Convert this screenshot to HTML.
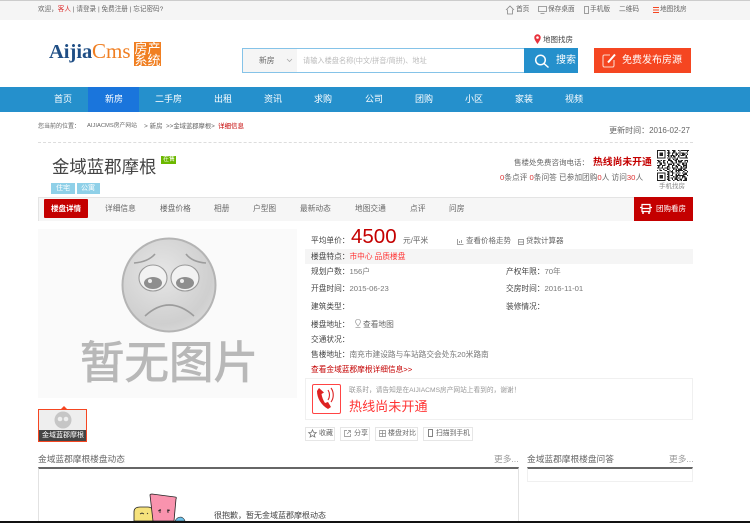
<!DOCTYPE html>
<html lang="zh"><head><meta charset="utf-8"><title>金域蓝郡摩根</title>
<style>
html,body{margin:0;padding:0;background:#fff}
body{width:750px;height:523px;position:relative;overflow:hidden;font-family:"Liberation Sans","Noto Sans CJK SC",sans-serif;color:#666}
.t{position:absolute;white-space:nowrap;line-height:1;font-size:7.700px}
.b{position:absolute;box-sizing:border-box}
.r{color:#c40000}.w{color:#fff}.d{color:#444}
.btn{position:absolute;top:427px;height:14px;box-sizing:border-box;border:1px solid #e6e6e6;background:#fff;font-size:7px;line-height:12px;color:#666;white-space:nowrap}
svg{position:absolute;overflow:visible}
#soft{position:absolute;left:0;top:0;width:750px;height:523px;filter:blur(.35px)}
</style></head><body><div id="soft">
<div class="b" style="left:0;top:0;width:750px;height:20px;background:#f5f5f5;border-top:1px solid #ccc"></div>
<div class="t" style="left:38px;top:7px;font-size:6.600px"><span>欢迎，</span><span style="color:#d33">客人</span> | 请登录 | 免费注册 | 忘记密码?</div>
<svg style="left:505px;top:5px" width="10" height="10" viewBox="0 0 10 10" fill="none" stroke="#888" stroke-width=".8"><path d="M1 5 5 1l4 4M2.500 4.500V9h5V4.500"/></svg>
<div class="t" style="left:516px;top:7px;font-size:6.700px">首页</div>
<svg style="left:538px;top:6px" width="9" height="8" viewBox="0 0 9 8" fill="none" stroke="#888" stroke-width=".8"><path d="M.5.500h8v5h-8zM2.500 7.500h4"/></svg>
<div class="t" style="left:548px;top:7px;font-size:6.700px">保存桌面</div>
<svg style="left:584px;top:6px" width="5" height="8" viewBox="0 0 5 8" fill="none" stroke="#888" stroke-width=".8"><rect x=".5" y=".5" width="4" height="7"/></svg>
<div class="t" style="left:590px;top:7px;font-size:6.700px">手机版</div>
<div class="t" style="left:619px;top:7px;font-size:6.700px">二维码</div>
<div class="b" style="left:653px;top:7px;width:6px;height:1px;background:#f54621;box-shadow:0 2.500px 0 #f54621,0 5px 0 #f54621"></div>
<div class="t" style="left:660px;top:7px;font-size:6.700px">地图找房</div>

<div class="t" style="left:49px;top:42px;font:bold 20.500px/1 'Liberation Serif',serif;color:#1f4e85">Aijia</div>
<div class="t" style="left:92px;top:41px;font:21px/1 'Liberation Serif',serif;color:#f07f22">Cms</div>
<div class="b" style="left:134px;top:42px;width:27px;height:24px;background:#f07f22"></div>
<div class="t w" style="left:134.500px;top:42px;font-size:13px">房产</div>
<div class="t w" style="left:134.500px;top:54px;font-size:13px">系统</div>

<svg style="left:534px;top:34px" width="7" height="10" viewBox="0 0 7 10"><path d="M3.500 10C1.500 7 .3 5.500.3 3.500a3.200 3.200 0 0 1 6.400 0C6.700 5.500 5.500 7 3.500 10z" fill="#e8323c"/><circle cx="3.500" cy="3.500" r="1.300" fill="#fff"/></svg>
<div class="t d" style="left:543px;top:36px;font-size:7.500px">地图找房</div>

<div class="b" style="left:242px;top:48px;width:283px;height:25px;border:1px solid #85c3e8;background:#fff"></div>
<div class="b" style="left:243px;top:49px;width:54px;height:23px;background:#f5f5f5"></div>
<div class="t" style="left:259px;top:57px;font-size:7.700px">新房</div>
<svg style="left:286px;top:58px" width="7" height="5" viewBox="0 0 7 5" fill="none" stroke="#aaa" stroke-width=".8"><path d="M1 1l2.500 2.500L6 1"/></svg>
<div class="t" style="left:303px;top:57px;font-size:7.200px;color:#bbb">请输入楼盘名称(中文/拼音/简拼)、地址</div>
<div class="b" style="left:524px;top:48px;width:54px;height:25px;background:#2590cc"></div>
<svg style="left:534px;top:54px" width="16" height="14" viewBox="0 0 16 14" fill="none" stroke="#fff" stroke-width="1.500"><circle cx="6.500" cy="6" r="4.800"/><path d="M10 9.500l4.500 4"/></svg>
<div class="t w" style="left:556px;top:56px;font-size:10px">搜索</div>
<div class="b" style="left:594px;top:48px;width:97px;height:25px;background:#f54621"></div>
<svg style="left:602px;top:53px" width="15" height="15" viewBox="0 0 15 15" fill="none" stroke="#fbd5c8" stroke-width="1.100"><path d="M8 2H2.500A1.500 1.500 0 0 0 1 3.500v9A1.500 1.500 0 0 0 2.500 14h8a1.500 1.500 0 0 0 1.500-1.500V7"/><path d="M6 9.500 13 1.500" stroke="#fff" stroke-width="2"/></svg>
<div class="t w" style="left:622px;top:56px;font-size:10px">免费发布房源</div>

<div class="b" style="left:0;top:87px;width:750px;height:25px;background:#2590cc"></div>
<div class="b" style="left:88px;top:87px;width:51px;height:25px;background:#1a75dc"></div>
<div class="t w" style="left:54px;top:95px;font-size:9px">首页</div>
<div class="t w" style="left:105px;top:95px;font-size:9px">新房</div>
<div class="t w" style="left:155px;top:95px;font-size:9px">二手房</div>
<div class="t w" style="left:214px;top:95px;font-size:9px">出租</div>
<div class="t w" style="left:264px;top:95px;font-size:9px">资讯</div>
<div class="t w" style="left:314px;top:95px;font-size:9px">求购</div>
<div class="t w" style="left:365px;top:95px;font-size:9px">公司</div>
<div class="t w" style="left:415px;top:95px;font-size:9px">团购</div>
<div class="t w" style="left:465px;top:95px;font-size:9px">小区</div>
<div class="t w" style="left:515px;top:95px;font-size:9px">家装</div>
<div class="t w" style="left:565px;top:95px;font-size:9px">视频</div>

<div class="t" style="left:38px;top:124px;font-size:6px">您当前的位置：</div>
<div class="t" style="left:87px;top:124px;font-size:5.800px">AIJIACMS房产网站</div>
<div class="t" style="left:144px;top:124px;font-size:6.500px">&gt; 新房</div>
<div class="t" style="left:166px;top:124px;font-size:6.300px">&gt;&gt;金域蓝郡摩根&gt;</div>
<div class="t r" style="left:218px;top:124px;font-size:6.500px">详细信息</div>
<div class="t" style="right:60px;top:127px;font-size:8px">更新时间：2016-02-27</div>
<div class="b" style="left:38px;top:142px;width:655px;height:0;border-top:1px dashed #ddd"></div>

<div class="t" style="left:52px;top:159px;font-size:17.400px;color:#444">金域蓝郡摩根</div>
<div class="b" style="left:161px;top:156px;width:15px;height:8px;background:#6cb800"></div>
<div class="t w" style="left:163px;top:157px;font-size:6px">在售</div>
<div class="b" style="left:51px;top:183px;width:24px;height:11px;background:#8fd0e8"></div>
<div class="b" style="left:77px;top:183px;width:23px;height:11px;background:#8fd0e8"></div>
<div class="t w" style="left:56px;top:185px;font-size:7px">住宅</div>
<div class="t w" style="left:81px;top:185px;font-size:7px">公寓</div>

<div class="t" style="left:514px;top:159px;font-size:7.500px">售楼处免费咨询电话：</div>
<div class="t r" style="left:593px;top:158px;font-size:9.800px;font-weight:bold">热线尚未开通</div>
<div class="t" style="left:500px;top:174px;font-size:7.700px"><span style="color:#d33">0</span>条点评 <span style="color:#d33">0</span>条问答 已参加团购<span style="color:#d33">0</span>人 访问<span style="color:#d33">30</span>人</div>
<svg style="left:657px;top:150px" width="31" height="31" viewBox="0 0 25 25" shape-rendering="crispEdges">
<path fill="none" stroke="#222" d="M0 .5h7m1 0h2m2 0h3m2 0h1m1 0h7M0 1.500h1m5 0h1m2 0h1m3 0h2m3 0h1m5 0h1M0 2.500h1m1 0h3m1 0h1m1 0h3m1 0h2m1 0h1m1 0h1m1 0h3m1 0h1M0 3.500h1m1 0h3m1 0h1m2 0h1m2 0h1m2 0h2m1 0h1m1 0h3m1 0h1M0 4.500h1m1 0h3m1 0h1m1 0h2m1 0h3m1 0h1m1 0h1m1 0h3m1 0h1M0 5.500h1m5 0h1m2 0h1m1 0h1m1 0h2m2 0h1m5 0h1M0 6.500h7m1 0h1m1 0h1m1 0h1m1 0h1m1 0h1m1 0h7M9 7.500h2m2 0h1m1 0h2M0 8.500h2m1 0h1m1 0h2m2 0h3m2 0h2m1 0h1m1 0h2m1 0h3M1 9.500h2m2 0h1m2 0h1m2 0h2m2 0h1m1 0h3m2 0h1m1 0h1M0 10.500h1m1 0h2m1 0h2m1 0h1m3 0h2m1 0h1m2 0h1m1 0h2m1 0h1M2 11.500h2m2 0h1m2 0h3m1 0h1m2 0h2m2 0h2m1 0h1M0 12.500h3m1 0h3m2 0h1m2 0h2m1 0h1m1 0h2m2 0h3M1 13.500h1m2 0h1m3 0h2m2 0h1m2 0h2m2 0h1m1 0h1m1 0h1M0 14.500h2m1 0h2m1 0h3m1 0h1m1 0h3m1 0h1m2 0h2m1 0h2M2 15.500h1m2 0h1m2 0h2m3 0h1m1 0h1m1 0h3m1 0h2M0 16.500h1m1 0h2m2 0h2m2 0h1m1 0h1m2 0h6m1 0h2M8 17.500h2m1 0h2m2 0h1m1 0h1m3 0h1m2 0h1M0 18.500h7m2 0h1m2 0h2m2 0h1m1 0h1m1 0h1m1 0h2M0 19.500h1m5 0h1m1 0h2m2 0h1m2 0h1m1 0h1m3 0h3M0 20.500h1m1 0h3m1 0h1m2 0h1m1 0h2m2 0h7m2 0h1M0 21.500h1m1 0h3m1 0h1m1 0h2m3 0h1m1 0h2m1 0h1m1 0h3M0 22.500h1m1 0h3m1 0h1m2 0h1m1 0h2m1 0h2m1 0h1m2 0h1m1 0h2M0 23.500h1m5 0h1m1 0h2m2 0h1m1 0h3m1 0h2m2 0h2M0 24.500h7m2 0h2m2 0h1m2 0h2m1 0h1m1 0h3"/></svg>
<div class="t" style="left:659px;top:184px;font-size:6.500px;color:#888">手机找房</div>

<div class="b" style="left:38px;top:197px;width:655px;height:24px;background:#f6f6f6;border-top:1px solid #e4e4e4;border-left:1px solid #e4e4e4"></div>
<div class="b" style="left:44px;top:199px;width:44px;height:19px;background:#c40000;border-radius:1px"></div>
<div class="t w" style="left:51px;top:205px;font-size:7.500px;font-weight:bold">楼盘详情</div>
<div class="t" style="left:105px;top:205px;font-size:7.700px">详细信息</div>
<div class="t" style="left:160px;top:205px;font-size:7.700px">楼盘价格</div>
<div class="t" style="left:214px;top:205px;font-size:7.700px">相册</div>
<div class="t" style="left:253px;top:205px;font-size:7.700px">户型图</div>
<div class="t" style="left:300px;top:205px;font-size:7.700px">最新动态</div>
<div class="t" style="left:355px;top:205px;font-size:7.700px">地图交通</div>
<div class="t" style="left:410px;top:205px;font-size:7.700px">点评</div>
<div class="t" style="left:449px;top:205px;font-size:7.700px">问房</div>
<div class="b" style="left:634px;top:197px;width:59px;height:24px;background:#c40000"></div>
<svg style="left:640px;top:203px" width="12" height="12" viewBox="0 0 12 12" fill="none" stroke="#fff" stroke-width="1.200"><path d="M2 1.500h8v7H2zM0 4.500h2M10 4.500h2M2 5.500h8"/><path d="M3 9v2M9 9v2" stroke-width="1.500"/></svg>
<div class="t w" style="left:656px;top:205px;font-size:7.500px">团购看房</div>

<div class="b" style="left:38px;top:229px;width:259px;height:169px;background:#fafafa"></div>
<svg style="left:0;top:0" width="750" height="523">
<defs><radialGradient id="g" cx=".42" cy=".38" r=".72"><stop offset="0" stop-color="#e6e6e6"/><stop offset=".75" stop-color="#cfcfcf"/><stop offset="1" stop-color="#dcdcdc"/></radialGradient></defs>
<circle cx="169" cy="285" r="46.500" fill="url(#g)" stroke="#b4b4b4" stroke-width="2"/>
<ellipse cx="153" cy="278" rx="14" ry="13" fill="#f2f2f2" stroke="#999" stroke-width="1.100"/>
<ellipse cx="185" cy="278" rx="14" ry="13" fill="#f2f2f2" stroke="#999" stroke-width="1.100"/>
<ellipse cx="153" cy="283" rx="9" ry="6" fill="#8e8e8e"/><ellipse cx="185" cy="283" rx="9" ry="6" fill="#8e8e8e"/>
<circle cx="150" cy="281" r="2" fill="#eee"/><circle cx="182" cy="281" r="2" fill="#eee"/>
<path d="M134 263Q148 262 155 254M186 254Q192 262 206 263M145 316Q169 294 194 316" fill="none" stroke="#9c9c9c" stroke-width="1.600"/>
</svg>
<div class="t" style="left:80px;top:342px;font-size:44.500px;color:#b8b8b8;-webkit-text-stroke:.9px #b8b8b8">暂无图片</div>

<div class="b" style="left:61px;top:406px;width:0;height:0;border:3px solid transparent;border-top:0;border-bottom:3px solid #f54621"></div>
<div class="b" style="left:38px;top:409px;width:49px;height:33px;background:#eee;border:1px solid #f54621"></div>
<svg style="left:0;top:0" width="750" height="523"><circle cx="63" cy="420" r="8.500" fill="#c6c6c6"/><circle cx="60" cy="419" r="2.300" fill="#eee"/><circle cx="66" cy="419" r="2.300" fill="#eee"/></svg>
<div class="b" style="left:39px;top:430px;width:47px;height:11px;background:#444"></div>
<div class="t w" style="left:42px;top:432px;font-size:7px">金域蓝郡摩根</div>

<div class="t" style="left:311px;top:237px;color:#444">平均单价：</div>
<div class="t r" style="left:351px;top:227px;font-size:20.500px">4500</div>
<div class="t" style="left:403px;top:237px">元/平米</div>
<svg style="left:457px;top:239px" width="7" height="6" fill="none" stroke="#888" stroke-width=".8"><path d="M.5 0v5.500h6M2.500 4V2M4.500 4V1"/></svg>
<div class="t" style="left:466px;top:237px;font-size:7.500px">查看价格走势</div>
<svg style="left:518px;top:239px" width="6" height="6" fill="none" stroke="#888" stroke-width=".8"><rect x=".5" y=".5" width="5" height="5"/><path d="M.5 3h5"/></svg>
<div class="t" style="left:526px;top:237px;font-size:7.500px">贷款计算器</div>
<div class="b" style="left:305px;top:249px;width:388px;height:15px;background:#f5f5f5"></div>
<div class="t" style="left:311px;top:253px;color:#444">楼盘特点：<span style="color:#f33">市中心 品质楼盘</span></div>
<div class="t" style="left:311px;top:268px;color:#444">规划户数：<span style="color:#777">156户</span></div>
<div class="t" style="left:506px;top:268px;color:#444">产权年限：<span style="color:#777">70年</span></div>
<div class="t" style="left:311px;top:285px;color:#444">开盘时间：<span style="color:#777">2015-06-23</span></div>
<div class="t" style="left:506px;top:285px;color:#444">交房时间：<span style="color:#777">2016-11-01</span></div>
<div class="t" style="left:311px;top:303px;color:#444">建筑类型：</div>
<div class="t" style="left:506px;top:303px;color:#444">装修情况：</div>
<div class="t" style="left:311px;top:321px;color:#444">楼盘地址：</div>
<svg style="left:355px;top:319px" width="6" height="9" viewBox="0 0 6 9" fill="none" stroke="#999" stroke-width=".7"><path d="M3 7C1.500 5 .5 4 .5 2.800a2.500 2.500 0 0 1 5 0C5.500 4 4.500 5 3 7z"/><path d="M.5 8.500h5"/></svg>
<div class="t" style="left:363px;top:321px">查看地图</div>
<div class="t" style="left:311px;top:336px;color:#444">交通状况：</div>
<div class="t" style="left:311px;top:351px;color:#444">售楼地址：<span style="color:#777">南充市建设路与车站路交会处东20米路南</span></div>
<div class="t r" style="left:311px;top:366px">查看金域蓝郡摩根详细信息&gt;&gt;</div>

<div class="b" style="left:305px;top:378px;width:388px;height:42px;border:1px solid #f0f0f0"></div>
<div class="b" style="left:312px;top:384px;width:29px;height:30px;border:1px solid #f44;border-radius:2px"></div>
<svg style="left:315px;top:386px" width="23" height="26" viewBox="0 0 23 26" fill="none"><path d="M4 2 2 5c0 7 4 14 11 18l3-2-3-5-3 1C8 14 7 11 6.500 8L9 6.500z" fill="#d22"/><path d="M13 4c2 3 2 7 0 10M16 2c3 4 3 10 0 14" stroke="#d22" stroke-width="1.100"/></svg>
<div class="t" style="left:349px;top:388px;font-size:6.700px;color:#999">联系时，请告知是在AIJIACMS房产网站上看到的，谢谢！</div>
<div class="t" style="left:349px;top:400px;font-size:13.100px;color:#f33">热线尚未开通</div>

<div class="btn" style="left:305px;width:30px;padding-left:13px">收藏</div>
<svg style="left:308px;top:429px" width="9" height="9" viewBox="0 0 9 9" fill="none" stroke="#777" stroke-width=".8"><path d="M4.500.8 5.600 3.400 8.300 3.600 6.200 5.400 6.900 8 4.500 6.600 2.100 8 2.800 5.400.7 3.600 3.400 3.400z"/></svg>
<div class="btn" style="left:340px;width:30px;padding-left:13px">分享</div>
<svg style="left:344px;top:430px" width="7" height="7" fill="none" stroke="#888" stroke-width=".7"><path d="M3 .5H.5v6h6V4M4 .5h2.500V3M6 1 3 4"/></svg>
<div class="btn" style="left:375px;width:43px;padding-left:12px">楼盘对比</div>
<svg style="left:379px;top:430px" width="7" height="7" fill="none" stroke="#888" stroke-width=".7"><path d="M.5.500h6v6h-6zM3.500.5v6M.5 3.500h6"/></svg>
<div class="btn" style="left:423px;width:50px;padding-left:12px;font-size:6.800px">扫描到手机</div>
<svg style="left:428px;top:429px" width="5" height="8" fill="none" stroke="#666" stroke-width=".8"><rect x=".5" y=".5" width="4" height="7"/></svg>

<div class="t" style="left:38px;top:455px;font-size:8.700px">金域蓝郡摩根楼盘动态</div>
<div class="t" style="left:494px;top:455px;font-size:8.700px;color:#999">更多...</div>
<div class="t" style="left:527px;top:455px;font-size:8.700px">金域蓝郡摩根楼盘问答</div>
<div class="t" style="left:669px;top:455px;font-size:8.700px;color:#999">更多...</div>
<div class="b" style="left:38px;top:467px;width:481px;height:56px;border:1px solid #e2e2e2;border-top:2px solid #666"></div>
<div class="b" style="left:527px;top:467px;width:166px;height:15px;border:1px solid #f0f0f0;border-top:2px solid #666"></div>

<svg style="left:0;top:0" width="750" height="523">
<path d="M134 521V512Q134 507 140 507H148Q152 507 153 511V521z" fill="#f6e27c" stroke="#222" stroke-width=".8"/>
<path d="M150 495 Q150 494 152 494L175 497Q177 497 176 499L174 521H153z" fill="#f993ae" stroke="#222" stroke-width=".8"/>
<path d="M175 521Q177 517 181 517Q184 518 185 521z" fill="#6cc0e8" stroke="#222" stroke-width=".6"/>
<path d="M158 511l3-1M170 510l-3 1M160 509v4M168 509v4M140 514l2-1 2 1M147 514l1-1" stroke="#222" stroke-width=".8" fill="none"/>
</svg>
<div class="t" style="left:214px;top:512px;font-size:8px;color:#444">很抱歉，暂无金域蓝郡摩根动态</div>
</div>
<div class="b" style="left:0;top:521px;width:750px;height:2px;background:#111"></div>
</body></html>
